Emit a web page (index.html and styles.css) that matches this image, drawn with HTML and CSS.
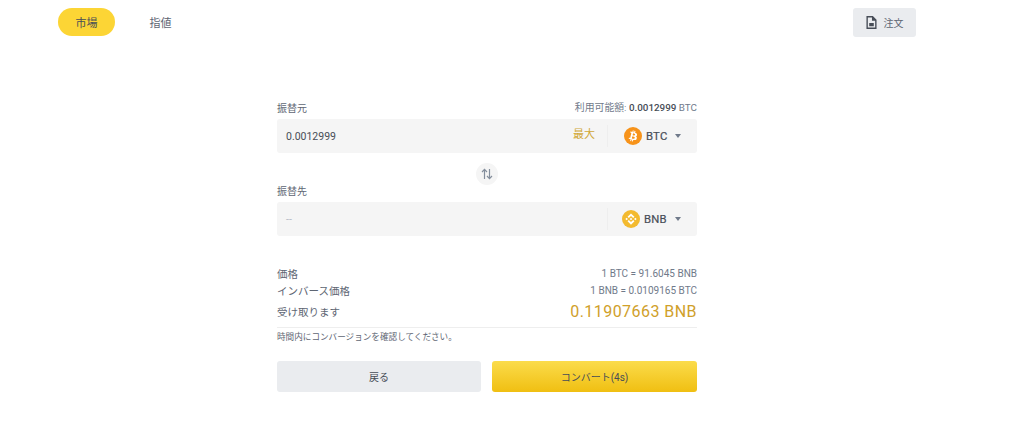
FILE: index.html
```html
<!DOCTYPE html>
<html lang="ja">
<head>
<meta charset="utf-8">
<title>コンバート</title>
<link rel="stylesheet" href="styles.css">
</head>
<body>
<header class="topbar">
  <nav class="tabs">
    <span class="tab tab-active">市場</span>
    <span class="tab">指値</span>
  </nav>
  <button class="order-btn">
    <svg class="order-icon" viewBox="0 0 12 14" width="12" height="14"><path fill-rule="evenodd" fill="#474d57" d="M.5 0h7L11.500 4v10H.5zM2 1.500v11h8V5H6.500V1.500zM3.500 7.500h5v3.500h-5z"/></svg>
    <span>注文</span>
  </button>
</header>

<main class="form">
  <div class="label-row">
    <span>振替元</span>
    <span class="avail">利用可能額: <b>0.0012999</b> BTC</span>
  </div>
  <div class="field">
    <span class="amount">0.0012999</span>
    <span class="max">最大</span>
    <span class="coin coin-btc">
      <svg class="coin-icon" viewBox="0 0 32 32" width="18" height="18"><circle cx="16" cy="16" r="16" fill="#f7931a"/><path fill="#fff" d="M23.189 14.02c.314-2.096-1.283-3.223-3.465-3.975l.708-2.84-1.728-.43-.69 2.765c-.454-.114-.92-.22-1.385-.326l.695-2.783L15.596 6l-.708 2.839c-.376-.086-.746-.17-1.104-.26l.002-.009-2.384-.595-.46 1.846s1.283.294 1.256.312c.7.175.826.638.805 1.006l-.806 3.235c.048.012.11.03.18.057l-.183-.045-1.13 4.532c-.086.212-.303.531-.793.41.018.025-1.256-.313-1.256-.313l-.858 1.978 2.25.561c.418.105.828.215 1.231.318l-.715 2.872 1.727.43.708-2.84c.472.127.93.245 1.378.357l-.706 2.828 1.728.43.715-2.866c2.948.558 5.164.333 6.097-2.333.752-2.146-.037-3.385-1.588-4.192 1.13-.26 1.98-1.003 2.207-2.538zm-3.95 5.538c-.533 2.147-4.148.986-5.32.695l.95-3.805c1.172.293 4.929.872 4.37 3.11zm.535-5.569c-.487 1.953-3.495.96-4.47.717l.86-3.45c.975.243 4.118.696 3.61 2.733z"/></svg>
      <span class="coin-name">BTC</span>
      <i class="caret"></i>
    </span>
  </div>

  <div class="swap-row">
    <span class="swap">
      <svg viewBox="0 0 12 12" width="12" height="12"><path fill="none" stroke="#848e9c" stroke-width="1.200" d="M3.500 11V1.500M1 4l2.500-2.600L6 4M8.500 1v9.500M6 8l2.500 2.600L11 8"/></svg>
    </span>
  </div>

  <div class="label-row label-to"><span>振替先</span></div>
  <div class="field">
    <span class="amount amount-empty">--</span>
    <span class="coin coin-bnb">
      <svg class="coin-icon" viewBox="0 0 32 32" width="18" height="18"><circle cx="16" cy="16" r="16" fill="#f3ba2f"/><path fill="#fff" d="M12.116 14.404L16 10.52l3.886 3.886 2.26-2.26L16 6l-6.144 6.144 2.26 2.26zM6 16l2.26-2.26L10.52 16l-2.26 2.26L6 16zm6.116 1.596L16 21.48l3.886-3.886 2.26 2.259L16 26l-6.144-6.144-.003-.003 2.263-2.257zM21.48 16l2.26-2.26L26 16l-2.26 2.26L21.48 16zm-3.188-.002h.002V16L16 18.294l-2.291-2.29-.004-.004.004-.003.401-.402.195-.195L16 13.706l2.293 2.293z"/></svg>
      <span class="coin-name">BNB</span>
      <i class="caret"></i>
    </span>
  </div>

  <div class="rates">
    <div class="rate-row"><span>価格</span><span class="rate-val">1 BTC = 91.6045 BNB</span></div>
    <div class="rate-row"><span>インバース価格</span><span class="rate-val">1 BNB = 0.0109165 BTC</span></div>
    <div class="rate-row rate-receive"><span>受け取ります</span><span class="receive-val">0.11907663 BNB</span></div>
  </div>
  <p class="note">時間内にコンバージョンを確認してください。</p>

  <div class="actions">
    <button class="btn btn-back">戻る</button>
    <button class="btn btn-convert">コンバート(4s)</button>
  </div>
</main>
</body>
</html>
```

FILE: styles.css
```css
* { box-sizing: border-box; }
html, body { margin: 0; padding: 0; }
body {
  width: 1024px;
  height: 430px;
  overflow: hidden;
  background: #fff;
  color: #474d57;
  font-family: Roboto, "Noto Sans CJK JP", sans-serif;
  font-size: 11px;
}
.topbar {
  display: flex;
  justify-content: space-between;
  align-items: flex-start;
  padding: 8px 108px 0 58px;
}
.tabs { display: flex; gap: 17px; }
.tab {
  display: flex;
  align-items: center;
  justify-content: center;
  height: 28px;
  min-width: 57px;
  font-size: 11px;
  border-radius: 14px;
  color: #5e6673;
}
.tab-active { background: #fcd535; color: #474d57; }
.order-btn {
  display: flex;
  align-items: center;
  justify-content: center;
  gap: 7px;
  width: 63px;
  height: 29px;
  padding: 0;
  border: 0;
  border-radius: 3px;
  background: #eaecef;
  color: #5e6673;
  font: inherit;
  font-size: 10px;
}
.order-icon { width: 11px; height: 13px; }
.form {
  width: 420px;
  margin: 0 0 0 277px;
  padding-top: 62px;
}
.label-row {
  display: flex;
  justify-content: space-between;
  align-items: center;
  height: 16px;
  font-size: 10px;
  color: #5e6673;
}
.avail { color: #707a8a; font-size: 9.850px; }
.avail b { color: #474d57; font-weight: 500; }
.field {
  display: flex;
  align-items: center;
  height: 34px;
  margin-top: 4px;
  padding-left: 9px;
  background: #f5f5f5;
  border-radius: 3px;
}
.amount { flex: 1; font-size: 10.500px; color: #474d57; }
.amount-empty { color: #b7bdc6; }
.max {
  padding: 0 12px 3px 0;
  color: #c99400;
  font-size: 11px;
  line-height: 1;
  opacity: .8;
}
.coin {
  display: flex;
  align-items: center;
  width: 90px;
  height: 22px;
  border-left: 1px solid #eeeeee;
  font-size: 11.300px;
  font-weight: 500;
  color: #474d57;
}
.coin-btc { padding-left: 16px; }
.coin-bnb { padding-left: 14px; }
.coin-icon { flex: none; }
.coin-name { margin-left: 4px; width: 29px; letter-spacing: .2px; font-weight: 400; -webkit-text-stroke: .2px #474d57; }
.coin-bnb .coin-name { margin-left: 4px; width: 31px; }
.caret {
  width: 0;
  height: 0;
  border-left: 3.500px solid transparent;
  border-right: 3.500px solid transparent;
  border-top: 4px solid #707a8a;
}
.swap-row {
  display: flex;
  justify-content: center;
  height: 22px;
  margin-top: 10px;
}
.swap {
  display: flex;
  align-items: center;
  justify-content: center;
  width: 22px;
  height: 22px;
  border-radius: 50%;
  background: #f5f5f5;
}
.label-to { margin-top: -3px; }
.rates { margin-top: 29px; border-bottom: 1px solid #eeeeee; padding-bottom: 3px; }
.rate-row {
  display: flex;
  justify-content: space-between;
  align-items: center;
  height: 17px;
  font-size: 10.500px;
  color: #5e6673;
}
.rate-val { font-size: 10px; color: #707a8a; }
.rate-receive { height: 25px; }
.receive-val { font-size: 16px; color: #d0a02a; letter-spacing: .45px; }
.note {
  margin: 2px 0 0;
  height: 14px;
  line-height: 14px;
  font-size: 8.600px;
  color: #5e6673;
}
.actions {
  display: flex;
  justify-content: space-between;
  margin-top: 17px;
}
.btn {
  height: 31px;
  padding: 0;
  border: 0;
  border-radius: 3px;
  font: inherit;
  font-size: 10px;
  color: #474d57;
}
.btn-back { width: 204px; background: #eaecef; }
.btn-convert {
  width: 205px;
  background: linear-gradient(180deg, #fbdc4b 0%, #f0bf12 100%);
}
```
